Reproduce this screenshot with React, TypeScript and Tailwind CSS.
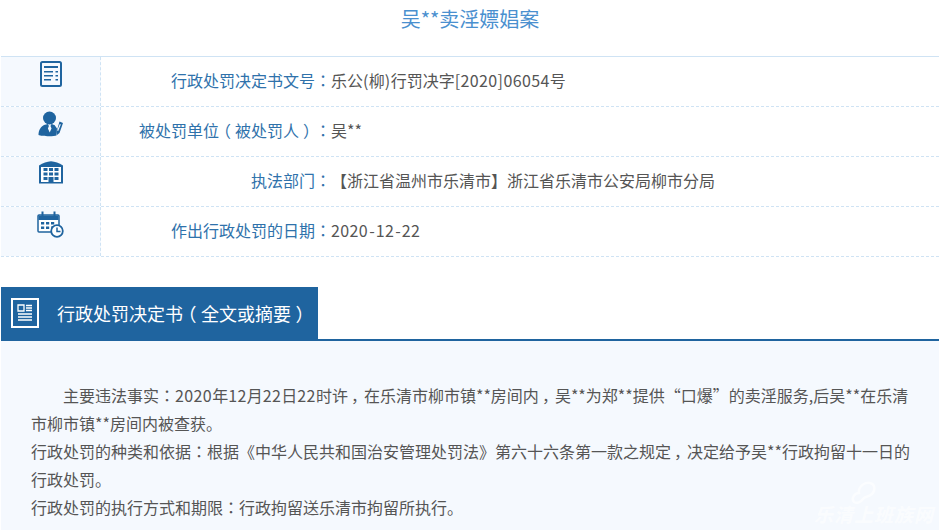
const rows = [
  { label: '行政处罚决定书文号', value: '乐公(柳)行罚决字[2020]06054号', icon: DocIcon },
  { label: '被处罚单位（被处罚人）', value: '吴**', icon: PersonIcon },
  { label: '执法部门', value: '【浙江省温州市乐清市】浙江省乐清市公安局柳市分局', icon: BuildingIcon },
  { label: '作出行政处罚的日期', value: '2020-12-22', icon: CalendarIcon },
];

// fullwidth colon and brackets sit centred in the box in the original font
function Txt({ children }: { children: string }) {
  const parts = children.split(/(：|（|）|，|-|[0-9\[\]()]+)/).filter(Boolean);
  return (
    <>
      {parts.map((p, i) => {
        if (p === '：') return <span key={i} className="font-['Noto_Sans_CJK_TC',sans-serif]">{p}</span>;
        if (p === '（') return <span key={i} className="relative -left-[0.25em]">{p}</span>;
        if (p === '）') return <span key={i} className="relative left-[0.25em]">{p}</span>;
        if (p === '，') return <span key={i} className="relative left-[3px]">{p}</span>;
        if (p === '-') return <span key={i} className="px-[1px]">{p}</span>;
        if (/^[0-9\[\]()]+$/.test(p)) return <span key={i} className="tracking-[0.4px]">{p}</span>;
        return p;
      })}
    </>
  );
}

function DocIcon() {
  return (
    <svg width="22" height="26" viewBox="0 0 22 26" fill="none">
      <rect x="1" y="1" width="20" height="24" rx="1.5" stroke="#1f649f" strokeWidth="2" />
      <path d="M4 5h14v2H4zM4 10h9v1.6H4zM15.5 10H18v1.6h-2.500zM4 14h9v1.600H4zM15.500 14H18v1.600h-2.500zM4 18h7v1.600H4zM15.500 18H18v1.600h-2.500z" fill="#1f649f" />
    </svg>
  );
}

function PersonIcon() {
  return (
    <svg width="26" height="26" viewBox="0 0 26 26" fill="none">
      <circle cx="11.500" cy="7" r="6.500" fill="#1f649f" />
      <path d="M6 14c-3 1.500-5.500 5-5.500 10 3 1.500 16 1.500 18 .5l.5-7-2.500-3.500c-1.500-.5-3-1-3-1l-1 2 1 2.500-1.800 4-1.800-4 1-2.500-1-2z" fill="#1f649f" />
      <path d="M21.500 10.500l3.500 1.500-3.500 10-2.500 2-.5-3z" fill="#1f649f" />
      <path d="M21.800 13l1 .5-2.600 6.500-1-.4z" fill="#fff" />
    </svg>
  );
}

function BuildingIcon() {
  return (
    <svg width="26" height="23" viewBox="0 0 26 23" fill="none">
      <path d="M1 4.500C5 2 9 .6 13 .3c4 .3 8 1.700 12 4.200V22.500H1z" fill="#1f649f" />
      <path d="M3 6h20v15H3z" fill="#fff" />
      <path d="M5.500 7h4v3h-4zM11 7h4v3h-4zM16.500 7h4v3h-4zM5.500 11.500h4v3h-4zM11 11.500h4v3h-4zM16.500 11.500h4v3h-4zM5.500 16h4v3h-4zM16.500 16h4v3h-4zM10.500 16h5v6h-5z" fill="#1f649f" />
    </svg>
  );
}

function CalendarIcon() {
  return (
    <svg width="27" height="27" viewBox="0 0 27 27" fill="none">
      <path d="M2 4h19a1 1 0 0 1 1 1v11h-7v5H2a1 1 0 0 1-1-1V5a1 1 0 0 1 1-1z" fill="#fff" stroke="#1f649f" strokeWidth="1.500" />
      <path d="M1.500 4.500h20V9h-20z" fill="#1f649f" />
      <path d="M5.500 0.500v5M17.500 0.500v5" stroke="#1f649f" strokeWidth="2" />
      <path d="M4 11h3.200v2.600H4zM9 11h3.200v2.600H9zM14 11h3.200v2.600H14zM4 15.500h3.200v2.600H4zM9 15.500h3.200v2.600H9z" fill="#1f649f" />
      <circle cx="20" cy="20" r="5.800" fill="#fff" stroke="#1f649f" strokeWidth="1.800" />
      <path d="M20 16.500V20.500h3.500" stroke="#1f649f" strokeWidth="1.500" />
    </svg>
  );
}

function ReportIcon() {
  return (
    <svg width="28" height="30" viewBox="0 0 28 30" fill="none">
      <rect x="1" y="1" width="26" height="28" stroke="#fff" strokeWidth="2" />
      <path d="M7 7h6v6H7z" stroke="#fff" strokeWidth="1.300" />
      <path d="M15 7.500h6M15 10h6M15 12.500h6M7 16h14M7 19h14M7 22h14" stroke="#fff" strokeWidth="1.300" />
    </svg>
  );
}

export default function App() {
  return (
    <div className="relative flex h-[530px] w-[939px] flex-col overflow-hidden bg-white pl-px font-['Noto_Sans_CJK_SC',sans-serif] text-base [text-spacing-trim:space-all]">
      <h1 className="h-[39px] pt-[4px] text-center text-[20px] leading-[30px] font-normal text-[#4a90cf]">吴**卖淫嫖娼案</h1>
      <div className="mt-[17px] border-t border-[#cfe3f4]">
        {rows.map((row) => (
          <div key={row.label} className="flex h-[50px] border-b border-dashed border-[#cfe3f4]">
            <div className="flex w-[100px] shrink-0 justify-center border-r border-dashed border-[#cfe3f4] bg-[#f5f9fe] pt-[4px]">
              <row.icon />
            </div>
            <div className="flex flex-1 items-center pb-[3px]">
              <span className="w-[230px] shrink-0 text-right text-[#2f72ab]"><Txt>{row.label + '：'}</Txt></span>
              <span className="text-[#555555]"><Txt>{row.value}</Txt></span>
            </div>
          </div>
        ))}
      </div>
      <div className="mt-[30px] flex border-b-2 border-[#1f649f]">
        <div className="flex h-[52px] w-[317px] items-center bg-[#1f649f] pl-[10px] text-white">
          <ReportIcon />
          <span className="ml-[18px] text-[18px]"><Txt>行政处罚决定书（全文或摘要）</Txt></span>
        </div>
      </div>
      <div className="flex-1 bg-[#f5f9fe] pt-[40px] pr-[28px] pl-[30px] leading-[28px] text-[#555555]">
        <p className="indent-[32px]"><Txt>主要违法事实：2020年12月22日22时许，在乐清市柳市镇**房间内，吴**为郑**提供“口爆”的卖淫服务,后吴**在乐清市柳市镇**房间内被查获。</Txt></p>
        <p><Txt>行政处罚的种类和依据：根据《中华人民共和国治安管理处罚法》第六十六条第一款之规定，决定给予吴**行政拘留十一日的行政处罚。</Txt></p>
        <p><Txt>行政处罚的执行方式和期限：行政拘留送乐清市拘留所执行。</Txt></p>
      </div>
      <div className="absolute right-[5px] bottom-[4px] text-[19px] leading-[24px] font-bold tracking-[1px] text-white/60 italic">乐清上班族网</div>
      <svg className="absolute top-[476px] left-[848px]" width="50" height="30" viewBox="0 0 50 30" fill="none">
        <path d="M6 26c-3-3 0-9 5-9-1-6 5-11 11-10 5 1 6 7 2 11-3 3-7 2-9 5-2 3-6 5-9 3z" stroke="#ffffff" strokeOpacity="0.6" strokeWidth="2.500" />
      </svg>
    </div>
  );
}
